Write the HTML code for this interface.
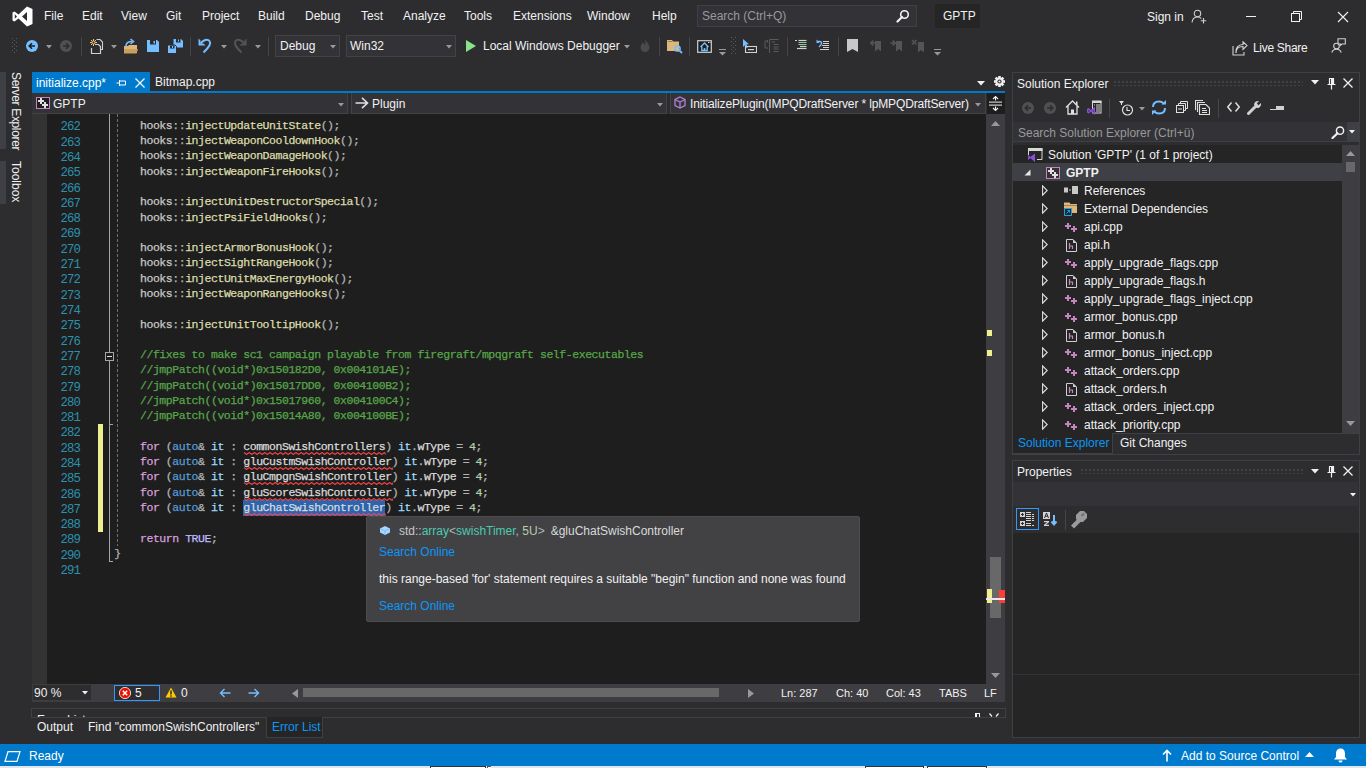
<!DOCTYPE html>
<html><head><meta charset="utf-8">
<style>
*{margin:0;padding:0;box-sizing:border-box}
html,body{width:1366px;height:768px;overflow:hidden;background:#2d2d30;font-family:"Liberation Sans",sans-serif;font-size:12px;color:#f1f1f1}
.a{position:absolute}
.t{position:absolute;white-space:nowrap;line-height:1}
.cd{position:absolute;white-space:pre;font-family:"Liberation Mono",monospace;font-size:11.5px;letter-spacing:-0.45px;line-height:15.31px;color:#dcdcdc;-webkit-text-stroke:0.25px currentColor}
.k{color:#d8a0df}.b{color:#569cd6}.v{color:#9cdcfe}.f{color:#dcdcaa}.c{color:#57a64a}.n{color:#b5cea8}.m{color:#beb7ff}.p{color:#b4b4b4}.g{color:#dadada}.ns{color:#c8c8c8}
</style></head><body>
<svg class="a" style="left:12px;top:6px" width="21" height="21" viewBox="0 0 21 21"><path d="M15 0.5 L20.5 3 V18 L15 20.5 L6.5 12.5 L2.5 15.5 L0.5 14.5 V6.5 L2.5 5.5 L6.5 8.5 Z M15 6 L10 10.5 L15 15 Z M2.8 8.3 V12.7 L5 10.5 Z" fill="#fff" fill-rule="evenodd"/></svg>
<div class="t" style="left:44px;top:9.84px;font-size:12px;">File</div>
<div class="t" style="left:82px;top:9.84px;font-size:12px;">Edit</div>
<div class="t" style="left:121px;top:9.84px;font-size:12px;">View</div>
<div class="t" style="left:166px;top:9.84px;font-size:12px;">Git</div>
<div class="t" style="left:202px;top:9.84px;font-size:12px;">Project</div>
<div class="t" style="left:258px;top:9.84px;font-size:12px;">Build</div>
<div class="t" style="left:305px;top:9.84px;font-size:12px;">Debug</div>
<div class="t" style="left:361px;top:9.84px;font-size:12px;">Test</div>
<div class="t" style="left:403px;top:9.84px;font-size:12px;">Analyze</div>
<div class="t" style="left:464px;top:9.84px;font-size:12px;">Tools</div>
<div class="t" style="left:513px;top:9.84px;font-size:12px;">Extensions</div>
<div class="t" style="left:587px;top:9.84px;font-size:12px;">Window</div>
<div class="t" style="left:652px;top:9.84px;font-size:12px;">Help</div>
<div class="a" style="left:697px;top:5px;width:220px;height:22px;background:#333337;border:1px solid #3f3f46"></div>
<div class="t" style="left:702px;top:9.84px;font-size:12px;color:#999999;">Search (Ctrl+Q)</div>
<svg class="a" style="left:896px;top:9px" width="14" height="14" viewBox="0 0 14 14"><circle cx="8.5" cy="5.5" r="3.8" fill="none" stroke="#f1f1f1" stroke-width="1.6"/><path d="M6 8 L1.5 12.5" stroke="#f1f1f1" stroke-width="2.2" stroke-linecap="round"/></svg>
<div class="a" style="left:935px;top:4px;width:45px;height:24px;background:#252526;"></div>
<div class="t" style="left:943px;top:9.84px;font-size:12px;">GPTP</div>
<div class="t" style="left:1147px;top:10.84px;font-size:12px;">Sign in</div>
<svg class="a" style="left:1191px;top:9px" width="16" height="15" viewBox="0 0 16 15"><circle cx="6.5" cy="4.5" r="3.2" fill="none" stroke="#d0d0d0" stroke-width="1.1"/><path d="M1 13.5 C1.5 9.5 3.5 8 6.5 8 C8.5 8 9.5 8.7 10.3 9.5" fill="none" stroke="#d0d0d0" stroke-width="1.1"/><path d="M12.5 9 V14.5 M9.8 11.8 H15.2" stroke="#d0d0d0" stroke-width="1.1"/></svg>
<div class="a" style="left:1246px;top:16px;width:10px;height:1px;background:#f1f1f1;"></div>
<svg class="a" style="left:1291px;top:11px" width="12" height="12" viewBox="0 0 12 12"><rect x="0.5" y="2.5" width="8" height="8" fill="none" stroke="#f1f1f1"/><path d="M2.5 2.5 V0.5 H10.5 V8.5 H8.5" fill="none" stroke="#f1f1f1"/></svg>
<svg class="a" style="left:1337px;top:11px" width="12" height="12" viewBox="0 0 12 12"><path d="M1 1 L11 11 M11 1 L1 11" stroke="#f1f1f1" stroke-width="1.1"/></svg>
<svg class="a" style="left:12px;top:38px" width="5" height="16" viewBox="0 0 5 16"><rect x="0" y="0" width="1" height="1" fill="#5a5a5e"/><rect x="2" y="2" width="1" height="1" fill="#5a5a5e"/><rect x="4" y="0" width="1" height="1" fill="#5a5a5e"/><rect x="0" y="4" width="1" height="1" fill="#5a5a5e"/><rect x="2" y="6" width="1" height="1" fill="#5a5a5e"/><rect x="4" y="4" width="1" height="1" fill="#5a5a5e"/><rect x="0" y="8" width="1" height="1" fill="#5a5a5e"/><rect x="2" y="10" width="1" height="1" fill="#5a5a5e"/><rect x="4" y="8" width="1" height="1" fill="#5a5a5e"/><rect x="0" y="12" width="1" height="1" fill="#5a5a5e"/><rect x="2" y="14" width="1" height="1" fill="#5a5a5e"/><rect x="4" y="12" width="1" height="1" fill="#5a5a5e"/></svg>
<svg class="a" style="left:26px;top:40px" width="12" height="12" viewBox="0 0 12 12"><circle cx="6" cy="6" r="6" fill="#75beff"/><path d="M9 6 H3.5 M6 3.2 L3.2 6 L6 8.8" fill="none" stroke="#1e1e1e" stroke-width="1.6"/></svg>
<svg class="a" style="left:46px;top:45px" width="6" height="4" viewBox="0 0 6 4"><path d="M0 0 H6 L3 3.5 Z" fill="#999999"/></svg>
<svg class="a" style="left:60px;top:40px" width="12" height="12" viewBox="0 0 12 12"><circle cx="6" cy="6" r="6" fill="#505052"/><path d="M3 6 H8.5 M6 3.2 L8.8 6 L6 8.8" fill="none" stroke="#2d2d30" stroke-width="1.6"/></svg>
<div class="a" style="left:81px;top:37px;width:1px;height:19px;background:#464648;"></div>
<svg class="a" style="left:89px;top:38px" width="15" height="16" viewBox="0 0 15 16"><g stroke="#f5c46e" stroke-width="1"><path d="M4.5 1 V8 M1 4.5 H8 M2 2 L7 7 M7 2 L2 7"/></g><circle cx="4.5" cy="4.5" r="1.5" fill="#2d2d30" stroke="#f5c46e"/><path d="M7.5 1.5 H11 L13.5 4 V11.5 H12" fill="none" stroke="#d0d0d0" stroke-width="1.1"/><path d="M2.5 10 V15.5 H11.5 V8.5 L9.5 6.5 H6" fill="none" stroke="#d0d0d0" stroke-width="1.2"/><path d="M4 12 V14" stroke="#d0d0d0" stroke-width="0"/></svg>
<svg class="a" style="left:111px;top:45px" width="6" height="4" viewBox="0 0 6 4"><path d="M0 0 H6 L3 3.5 Z" fill="#999999"/></svg>
<svg class="a" style="left:123px;top:38px" width="16" height="16" viewBox="0 0 16 16"><path d="M1 8 H5 L6 7 H14 V15 H1 Z" fill="#dcb67a"/><path d="M1 11 H15 L13.5 15.5 H1 Z" fill="#c9a05a"/><path d="M3 8.5 C3 5 5 3.5 9 3.5" fill="none" stroke="#75beff" stroke-width="1.6"/><path d="M7.5 1 L10.5 3.5 L7.5 6" fill="none" stroke="#75beff" stroke-width="1.6"/></svg>
<svg class="a" style="left:147px;top:40px" width="12" height="12" viewBox="0 0 12 12"><path d="M0 0 H10 L12 2 V12 H0 Z" fill="#75beff"/><rect x="3" y="0" width="6" height="4.5" fill="#2d2d30"/><rect x="6.5" y="1" width="1.5" height="2.5" fill="#75beff"/></svg>
<svg class="a" style="left:167px;top:38px" width="16" height="16" viewBox="0 0 16 16"><path d="M6.5 1 H14 L16 3 V9.5 H6.5 Z" fill="#75beff"/><rect x="9" y="1" width="4.5" height="3.5" fill="#2d2d30"/><rect x="11" y="1.5" width="1" height="2" fill="#75beff"/><path d="M0.5 7 H8 L9.5 8.5 V15.5 H0.5 Z" fill="#75beff" stroke="#2d2d30" stroke-width="1"/><rect x="3" y="7.5" width="4.5" height="3" fill="#2d2d30"/><rect x="5" y="8" width="1" height="2" fill="#75beff"/></svg>
<div class="a" style="left:190px;top:37px;width:1px;height:19px;background:#464648;"></div>
<svg class="a" style="left:195px;top:36px" width="20" height="20" viewBox="0 0 20 20"><path d="M3.5 2.5 V9.5 H10.5 L8.5 7.5 H5.5 V4.5 Z" fill="#75beff"/><path d="M5.5 7.5 C8 4 12.5 2.5 14.5 5 C16.5 7.5 15 10.5 8.5 16.5" fill="none" stroke="#75beff" stroke-width="2"/></svg>
<svg class="a" style="left:221px;top:45px" width="6" height="4" viewBox="0 0 6 4"><path d="M0 0 H6 L3 3.5 Z" fill="#999999"/></svg>
<svg class="a" style="left:230px;top:36px" width="20" height="20" viewBox="0 0 20 20"><path d="M16.5 2.5 V9.5 H9.5 L11.5 7.5 H14.5 V4.5 Z" fill="#555557"/><path d="M14.5 7.5 C12 4 7.5 2.5 5.5 5 C3.5 7.5 5 10.5 11.5 16.5" fill="none" stroke="#555557" stroke-width="2"/></svg>
<svg class="a" style="left:255px;top:45px" width="6" height="4" viewBox="0 0 6 4"><path d="M0 0 H6 L3 3.5 Z" fill="#999999"/></svg>
<div class="a" style="left:268px;top:37px;width:1px;height:19px;background:#464648;"></div>
<div class="a" style="left:275px;top:35px;width:65px;height:22px;background:#333337;border:1px solid #434346"></div>
<div class="t" style="left:280px;top:39.84px;font-size:12px;">Debug</div>
<svg class="a" style="left:330px;top:45px" width="6" height="4" viewBox="0 0 6 4"><path d="M0 0 H6 L3 3.5 Z" fill="#999999"/></svg>
<div class="a" style="left:346px;top:35px;width:110px;height:22px;background:#333337;border:1px solid #434346"></div>
<div class="t" style="left:350px;top:39.84px;font-size:12px;">Win32</div>
<svg class="a" style="left:446px;top:45px" width="6" height="4" viewBox="0 0 6 4"><path d="M0 0 H6 L3 3.5 Z" fill="#999999"/></svg>
<svg class="a" style="left:466px;top:40px" width="10" height="12" viewBox="0 0 10 12"><path d="M0 0 L10 6 L0 12 Z" fill="#8ae28a"/></svg>
<div class="t" style="left:483px;top:39.84px;font-size:12px;">Local Windows Debugger</div>
<svg class="a" style="left:624px;top:45px" width="6" height="4" viewBox="0 0 6 4"><path d="M0 0 H6 L3 3.5 Z" fill="#999999"/></svg>
<svg class="a" style="left:640px;top:39px" width="10" height="13" viewBox="0 0 10 13"><path d="M5 0 C6 3 9.5 5 9.5 8.5 C9.5 11 7.5 13 5 13 C2.5 13 0.5 11 0.5 8.5 C0.5 6.5 2 5 3 3 C3.5 5 4.5 5.5 5 6 C5.5 4 5.5 2 5 0 Z" fill="#4a4a4c"/></svg>
<div class="a" style="left:659px;top:37px;width:1px;height:19px;background:#464648;"></div>
<svg class="a" style="left:667px;top:39px" width="16" height="15" viewBox="0 0 16 15"><path d="M0 1 H5 L6 2.5 H12 V12 H0 Z" fill="#dcb67a"/><rect x="1" y="2" width="4" height="1" fill="#a0804a"/><circle cx="10.5" cy="9.5" r="2.6" fill="none" stroke="#75beff" stroke-width="1.5"/><path d="M12.3 11.3 L15 14" stroke="#75beff" stroke-width="1.8"/></svg>
<div class="a" style="left:689px;top:37px;width:1px;height:19px;background:#464648;"></div>
<svg class="a" style="left:697px;top:40px" width="15" height="13" viewBox="0 0 15 13"><rect x="0.7" y="0.7" width="13.6" height="11.6" fill="#1e1e1e" stroke="#d0d0d0" stroke-width="1.2"/><path d="M3.5 7 L7.5 3 L11.5 7 M4.8 6 V10.5 H10.2 V6" fill="none" stroke="#75beff" stroke-width="1.3"/><rect x="6.7" y="8" width="1.6" height="2.5" fill="#75beff"/><rect x="11" y="2" width="1" height="1" fill="#d0d0d0"/><rect x="12.5" y="2" width="1" height="1" fill="#d0d0d0"/></svg>
<svg class="a" style="left:719px;top:49px" width="7" height="7" viewBox="0 0 7 7"><rect x="0" y="0" width="7" height="1" fill="#999"/><path d="M0 3 H7 L3.5 6.5 Z" fill="#999"/></svg>
<svg class="a" style="left:731px;top:37px" width="5" height="18" viewBox="0 0 5 18"><rect x="0" y="0" width="1" height="1" fill="#5a5a5e"/><rect x="2" y="2" width="1" height="1" fill="#5a5a5e"/><rect x="4" y="0" width="1" height="1" fill="#5a5a5e"/><rect x="0" y="4" width="1" height="1" fill="#5a5a5e"/><rect x="2" y="6" width="1" height="1" fill="#5a5a5e"/><rect x="4" y="4" width="1" height="1" fill="#5a5a5e"/><rect x="0" y="8" width="1" height="1" fill="#5a5a5e"/><rect x="2" y="10" width="1" height="1" fill="#5a5a5e"/><rect x="4" y="8" width="1" height="1" fill="#5a5a5e"/><rect x="0" y="12" width="1" height="1" fill="#5a5a5e"/><rect x="2" y="14" width="1" height="1" fill="#5a5a5e"/><rect x="4" y="12" width="1" height="1" fill="#5a5a5e"/><rect x="0" y="16" width="1" height="1" fill="#5a5a5e"/><rect x="2" y="18" width="1" height="1" fill="#5a5a5e"/><rect x="4" y="16" width="1" height="1" fill="#5a5a5e"/></svg>
<svg class="a" style="left:742px;top:38px" width="15" height="15" viewBox="0 0 15 15"><path d="M1 1 L1 9 L3 7.2 L4.5 10 L5.8 9.3 L4.4 6.5 L7 6.3 Z" fill="#75beff"/><rect x="3.5" y="8.5" width="11" height="6" fill="none" stroke="#d0d0d0" stroke-width="1.1"/><rect x="6" y="11" width="6" height="1.2" fill="#d0d0d0"/></svg>
<svg class="a" style="left:764px;top:38px" width="15" height="16" viewBox="0 0 15 16"><g fill="none" stroke="#5a5a5c" stroke-width="1"><path d="M5.5 1.5 H14.5 M5.5 1.5 V15 M7.5 4 H11 M9.5 6.5 H14.5 M9.5 9 H14.5 M9.5 11 H14.5 M9.5 13.5 H14.5 M1 3 V10 H4 M1 3 H4 M3.5 2 V4.5"/></g></svg>
<div class="a" style="left:787px;top:37px;width:1px;height:19px;background:#464648;"></div>
<svg class="a" style="left:795px;top:39px" width="12" height="12" viewBox="0 0 12 12"><g stroke-width="1.2"><path d="M0 1.5 H2" stroke="#d0d0d0"/><path d="M3.5 1.5 H11.5" stroke="#d0d0d0"/><path d="M3.5 3.5 H11.5 M3.5 5.5 H11.5" stroke="#8ad08a"/><path d="M5 7.5 H11.5" stroke="#d0d0d0"/><path d="M2 9.5 H11.5" stroke="#d0d0d0"/></g></svg>
<svg class="a" style="left:816px;top:39px" width="14" height="13" viewBox="0 0 14 13"><g stroke-width="1.2" stroke="#d0d0d0"><path d="M7 2.5 H13 M7 4.5 H13 M6 6.5 H13 M7 8.5 H13 M4 10.5 H13"/></g><path d="M1 2.5 H4 C6 2.5 6.5 5.5 3 8" fill="none" stroke="#75beff" stroke-width="1.4"/><path d="M0.5 0.5 V4 H3.5 Z" fill="#75beff"/></svg>
<div class="a" style="left:838px;top:37px;width:1px;height:19px;background:#464648;"></div>
<svg class="a" style="left:847px;top:39px" width="11" height="13" viewBox="0 0 11 13"><path d="M0 0 H11 V13 L5.5 10 L0 13 Z" fill="#c8c8c8"/></svg>
<svg class="a" style="left:869px;top:39px" width="14" height="14" viewBox="0 0 14 14"><path d="M6 2 H12 V12.5 L9 10 L6 12.5 Z" fill="#555557"/><path d="M6.5 4 H2 M4.3 1.5 L1.8 4 L4.3 6.5" fill="none" stroke="#555557" stroke-width="1.6"/></svg>
<svg class="a" style="left:890px;top:39px" width="14" height="14" viewBox="0 0 14 14"><path d="M6 2 H12 V12.5 L9 10 L6 12.5 Z" fill="#555557"/><path d="M0.5 4 H5 M2.7 1.5 L5.2 4 L2.7 6.5" fill="none" stroke="#555557" stroke-width="1.6"/></svg>
<svg class="a" style="left:911px;top:39px" width="14" height="14" viewBox="0 0 14 14"><path d="M7 3 H13 V13.5 L10 11 L7 13.5 Z" fill="#555557"/><path d="M1 1 L5.5 5.5 M5.5 1 L1 5.5" fill="none" stroke="#555557" stroke-width="1.6"/></svg>
<svg class="a" style="left:934px;top:49px" width="7" height="7" viewBox="0 0 7 7"><rect x="0" y="0" width="7" height="1" fill="#999"/><path d="M0 3 H7 L3.5 6.5 Z" fill="#999"/></svg>
<svg class="a" style="left:1232px;top:41px" width="16" height="15" viewBox="0 0 16 15"><path d="M1 5 V14 H12 V11" fill="none" stroke="#d0d0d0" stroke-width="1.1"/><path d="M4 12 C4 7 7 5.5 11 5.5 V8.5 L15 4.5 L11 0.8 V3.5 C6 3.5 3.5 7 4 12 Z" fill="none" stroke="#d0d0d0" stroke-width="1.1"/></svg>
<div class="t" style="left:1253px;top:41.84px;font-size:12px;letter-spacing:-0.3px">Live Share</div>
<svg class="a" style="left:1331px;top:38px" width="15" height="15" viewBox="0 0 15 15"><circle cx="5.5" cy="8" r="2.8" fill="none" stroke="#d0d0d0" stroke-width="1.1"/><path d="M0.8 14.5 C1.5 12 3 11.2 5.5 11.2 C8 11.2 9.5 12 10.2 14.5" fill="none" stroke="#d0d0d0" stroke-width="1.1"/><path d="M7 0.7 H14.3 V6 H11 L9.5 7.3 V6 H7 Z" fill="none" stroke="#d0d0d0" stroke-width="1.1"/></svg>
<div class="a" style="left:0px;top:72px;width:6px;height:77px;background:#3f3f46;"></div>
<div class="a" style="left:0px;top:161px;width:6px;height:43px;background:#3f3f46;"></div>
<div class="t" style="left:22px;top:72px;font-size:12px;letter-spacing:-0.35px;transform-origin:0 0;transform:rotate(90deg);color:#f1f1f1">Server Explorer</div>
<div class="t" style="left:22px;top:161px;font-size:12px;transform-origin:0 0;transform:rotate(90deg);color:#f1f1f1">Toolbox</div>
<div class="a" style="left:32px;top:72px;width:118px;height:21px;background:#007acc;"></div>
<div class="a" style="left:32px;top:91px;width:973px;height:2px;background:#007acc;"></div>
<div class="t" style="left:36px;top:76.84px;font-size:12px;color:#ffffff;">initialize.cpp*</div>
<svg class="a" style="left:116px;top:78px" width="11" height="10" viewBox="0 0 11 10"><path d="M0.5 5 H3.5 M3.5 2 V8 M3.5 3 H9.5 V7 H3.5" fill="none" stroke="#fff" stroke-width="1"/></svg>
<svg class="a" style="left:135px;top:78px" width="10" height="10" viewBox="0 0 10 10"><path d="M0.5 0.5 L9.5 9.5 M9.5 0.5 L0.5 9.5" stroke="#fff" stroke-width="1.2"/></svg>
<div class="t" style="left:155px;top:76.34px;font-size:12px;">Bitmap.cpp</div>
<svg class="a" style="left:977px;top:81px" width="8" height="5" viewBox="0 0 8 5"><path d="M0 0 H8 L4 4.5 Z" fill="#f1f1f1"/></svg>
<svg class="a" style="left:994px;top:76px" width="11" height="11" viewBox="0 0 11 11"><g fill="#f1f1f1"><circle cx="5.5" cy="5.5" r="3.9"/><rect x="4.2" y="0" width="2.6" height="3" transform="rotate(0 5.5 5.5)"/><rect x="4.2" y="0" width="2.6" height="3" transform="rotate(45 5.5 5.5)"/><rect x="4.2" y="0" width="2.6" height="3" transform="rotate(90 5.5 5.5)"/><rect x="4.2" y="0" width="2.6" height="3" transform="rotate(135 5.5 5.5)"/><rect x="4.2" y="0" width="2.6" height="3" transform="rotate(180 5.5 5.5)"/><rect x="4.2" y="0" width="2.6" height="3" transform="rotate(225 5.5 5.5)"/><rect x="4.2" y="0" width="2.6" height="3" transform="rotate(270 5.5 5.5)"/><rect x="4.2" y="0" width="2.6" height="3" transform="rotate(315 5.5 5.5)"/></g><circle cx="5.5" cy="5.5" r="2.1" fill="#2d2d30"/><rect x="4.6" y="4.6" width="1.8" height="1.8" fill="#f1f1f1"/></svg>
<div class="a" style="left:32px;top:93px;width:973px;height:21px;background:#2d2d30;"></div>
<div class="a" style="left:32px;top:93px;width:316px;height:21px;background:#333337;border-right:1px solid #434346;border-bottom:1px solid #434346"></div>
<div class="a" style="left:351px;top:93px;width:316px;height:21px;background:#333337;border-left:1px solid #434346;border-right:1px solid #434346;border-bottom:1px solid #434346"></div>
<div class="a" style="left:670px;top:93px;width:316px;height:21px;background:#333337;border-left:1px solid #434346;border-right:1px solid #434346;border-bottom:1px solid #434346"></div>
<svg class="a" style="left:36px;top:97px" width="14" height="12" viewBox="0 0 14 12"><rect x="0.5" y="0.5" width="13" height="11" fill="#1e1e1e" stroke="#c586c0" stroke-width="1"/><g fill="#e0e0e0"><rect x="2" y="3" width="6" height="2"/><rect x="4" y="1" width="2" height="6"/><rect x="6" y="7" width="6" height="2"/><rect x="8" y="5" width="2" height="6"/></g></svg>
<div class="t" style="left:53px;top:97.84px;font-size:12px;">GPTP</div>
<svg class="a" style="left:338px;top:103px" width="6" height="4" viewBox="0 0 6 4"><path d="M0 0 H6 L3 3.5 Z" fill="#999999"/></svg>
<svg class="a" style="left:355px;top:97px" width="14" height="12" viewBox="0 0 14 12"><path d="M0.5 6 H12.5 M7 0.8 L12.5 6 L7 11.2" fill="none" stroke="#e0e0e0" stroke-width="1.6"/></svg>
<div class="t" style="left:372px;top:97.84px;font-size:12px;">Plugin</div>
<svg class="a" style="left:657px;top:103px" width="6" height="4" viewBox="0 0 6 4"><path d="M0 0 H6 L3 3.5 Z" fill="#999999"/></svg>
<svg class="a" style="left:674px;top:96px" width="12" height="13" viewBox="0 0 12 13"><path d="M6 1 L11 3.5 V9.5 L6 12 L1 9.5 V3.5 Z M1 3.5 L6 6 L11 3.5 M6 6 V12" fill="none" stroke="#b180d7" stroke-width="1.3"/></svg>
<div class="t" style="left:690px;top:97.84px;font-size:12px;letter-spacing:-0.14px">InitializePlugin(IMPQDraftServer * lpMPQDraftServer)</div>
<svg class="a" style="left:975px;top:103px" width="6" height="4" viewBox="0 0 6 4"><path d="M0 0 H6 L3 3.5 Z" fill="#999999"/></svg>
<div class="a" style="left:987px;top:93px;width:18px;height:21px;background:#1e1e1e;"></div>
<svg class="a" style="left:989px;top:96px" width="13" height="15" viewBox="0 0 13 15"><path d="M6.5 0.5 V4.5 M6.5 10.5 V14.5 M4 3 L6.5 0.5 L9 3 M4 12 L6.5 14.5 L9 12" fill="none" stroke="#f1f1f1" stroke-width="1.1"/><rect x="0" y="5.6" width="13" height="1" fill="#f1f1f1"/><rect x="0" y="8.6" width="13" height="1" fill="#f1f1f1"/></svg>
<div class="a" style="left:32px;top:114px;width:15px;height:570px;background:#333333;"></div>
<div class="a" style="left:47px;top:114px;width:939px;height:570px;background:#1e1e1e;"></div>
<div class="a" style="left:243.2px;top:500.1px;width:142px;height:15.7px;background:#2d64ae;"></div>
<div class="a" style="left:98px;top:423.6px;width:5px;height:108px;background:#efef90;"></div>
<div class="a" style="left:109px;top:114px;width:1px;height:448px;background:#a5a5a5;"></div>
<div class="a" style="left:109px;top:424px;width:4px;height:1px;background:#a5a5a5;"></div>
<div class="a" style="left:109px;top:561px;width:4px;height:1px;background:#a5a5a5;"></div>
<div class="a" style="left:105px;top:352px;width:9px;height:9px;background:#1e1e1e;border:1px solid #a5a5a5"></div>
<div class="a" style="left:107px;top:356px;width:5px;height:1px;background:#e0e0e0;"></div>
<div class="a" style="left:117px;top:114px;width:1px;height:432px;background:repeating-linear-gradient(#6e6e6e 0 3px,transparent 3px 5px)"></div>
<div class="cd" style="left:19px;width:61px;text-align:right;top:121.00px;line-height:12px;color:#2b91af;font-size:12.3px;letter-spacing:-0.9px;-webkit-text-stroke:0">262</div>
<div class="cd" style="left:140.00px;top:119.80px;line-height:12px"><span class="ns">hooks</span><span class="p">::</span><span class="f">injectUpdateUnitState</span><span class="p">();</span></div>
<div class="cd" style="left:19px;width:61px;text-align:right;top:137.00px;line-height:12px;color:#2b91af;font-size:12.3px;letter-spacing:-0.9px;-webkit-text-stroke:0">263</div>
<div class="cd" style="left:140.00px;top:135.09px;line-height:12px"><span class="ns">hooks</span><span class="p">::</span><span class="f">injectWeaponCooldownHook</span><span class="p">();</span></div>
<div class="cd" style="left:19px;width:61px;text-align:right;top:152.00px;line-height:12px;color:#2b91af;font-size:12.3px;letter-spacing:-0.9px;-webkit-text-stroke:0">264</div>
<div class="cd" style="left:140.00px;top:150.38px;line-height:12px"><span class="ns">hooks</span><span class="p">::</span><span class="f">injectWeaponDamageHook</span><span class="p">();</span></div>
<div class="cd" style="left:19px;width:61px;text-align:right;top:167.00px;line-height:12px;color:#2b91af;font-size:12.3px;letter-spacing:-0.9px;-webkit-text-stroke:0">265</div>
<div class="cd" style="left:140.00px;top:165.67px;line-height:12px"><span class="ns">hooks</span><span class="p">::</span><span class="f">injectWeaponFireHooks</span><span class="p">();</span></div>
<div class="cd" style="left:19px;width:61px;text-align:right;top:183.00px;line-height:12px;color:#2b91af;font-size:12.3px;letter-spacing:-0.9px;-webkit-text-stroke:0">266</div>
<div class="cd" style="left:19px;width:61px;text-align:right;top:198.00px;line-height:12px;color:#2b91af;font-size:12.3px;letter-spacing:-0.9px;-webkit-text-stroke:0">267</div>
<div class="cd" style="left:140.00px;top:196.25px;line-height:12px"><span class="ns">hooks</span><span class="p">::</span><span class="f">injectUnitDestructorSpecial</span><span class="p">();</span></div>
<div class="cd" style="left:19px;width:61px;text-align:right;top:213.00px;line-height:12px;color:#2b91af;font-size:12.3px;letter-spacing:-0.9px;-webkit-text-stroke:0">268</div>
<div class="cd" style="left:140.00px;top:211.54px;line-height:12px"><span class="ns">hooks</span><span class="p">::</span><span class="f">injectPsiFieldHooks</span><span class="p">();</span></div>
<div class="cd" style="left:19px;width:61px;text-align:right;top:228.00px;line-height:12px;color:#2b91af;font-size:12.3px;letter-spacing:-0.9px;-webkit-text-stroke:0">269</div>
<div class="cd" style="left:19px;width:61px;text-align:right;top:244.00px;line-height:12px;color:#2b91af;font-size:12.3px;letter-spacing:-0.9px;-webkit-text-stroke:0">270</div>
<div class="cd" style="left:140.00px;top:242.12px;line-height:12px"><span class="ns">hooks</span><span class="p">::</span><span class="f">injectArmorBonusHook</span><span class="p">();</span></div>
<div class="cd" style="left:19px;width:61px;text-align:right;top:259.00px;line-height:12px;color:#2b91af;font-size:12.3px;letter-spacing:-0.9px;-webkit-text-stroke:0">271</div>
<div class="cd" style="left:140.00px;top:257.41px;line-height:12px"><span class="ns">hooks</span><span class="p">::</span><span class="f">injectSightRangeHook</span><span class="p">();</span></div>
<div class="cd" style="left:19px;width:61px;text-align:right;top:274.00px;line-height:12px;color:#2b91af;font-size:12.3px;letter-spacing:-0.9px;-webkit-text-stroke:0">272</div>
<div class="cd" style="left:140.00px;top:272.70px;line-height:12px"><span class="ns">hooks</span><span class="p">::</span><span class="f">injectUnitMaxEnergyHook</span><span class="p">();</span></div>
<div class="cd" style="left:19px;width:61px;text-align:right;top:290.00px;line-height:12px;color:#2b91af;font-size:12.3px;letter-spacing:-0.9px;-webkit-text-stroke:0">273</div>
<div class="cd" style="left:140.00px;top:287.99px;line-height:12px"><span class="ns">hooks</span><span class="p">::</span><span class="f">injectWeaponRangeHooks</span><span class="p">();</span></div>
<div class="cd" style="left:19px;width:61px;text-align:right;top:305.00px;line-height:12px;color:#2b91af;font-size:12.3px;letter-spacing:-0.9px;-webkit-text-stroke:0">274</div>
<div class="cd" style="left:19px;width:61px;text-align:right;top:320.00px;line-height:12px;color:#2b91af;font-size:12.3px;letter-spacing:-0.9px;-webkit-text-stroke:0">275</div>
<div class="cd" style="left:140.00px;top:318.57px;line-height:12px"><span class="ns">hooks</span><span class="p">::</span><span class="f">injectUnitTooltipHook</span><span class="p">();</span></div>
<div class="cd" style="left:19px;width:61px;text-align:right;top:336.00px;line-height:12px;color:#2b91af;font-size:12.3px;letter-spacing:-0.9px;-webkit-text-stroke:0">276</div>
<div class="cd" style="left:19px;width:61px;text-align:right;top:351.00px;line-height:12px;color:#2b91af;font-size:12.3px;letter-spacing:-0.9px;-webkit-text-stroke:0">277</div>
<div class="cd" style="left:140.00px;top:349.15px;line-height:12px"><span class="c">//fixes to make sc1 campaign playable from firegraft/mpqgraft self-executables</span></div>
<div class="cd" style="left:19px;width:61px;text-align:right;top:366.00px;line-height:12px;color:#2b91af;font-size:12.3px;letter-spacing:-0.9px;-webkit-text-stroke:0">278</div>
<div class="cd" style="left:140.00px;top:364.44px;line-height:12px"><span class="c">//jmpPatch((void*)0x150182D0, 0x004101AE);</span></div>
<div class="cd" style="left:19px;width:61px;text-align:right;top:382.00px;line-height:12px;color:#2b91af;font-size:12.3px;letter-spacing:-0.9px;-webkit-text-stroke:0">279</div>
<div class="cd" style="left:140.00px;top:379.73px;line-height:12px"><span class="c">//jmpPatch((void*)0x15017DD0, 0x004100B2);</span></div>
<div class="cd" style="left:19px;width:61px;text-align:right;top:397.00px;line-height:12px;color:#2b91af;font-size:12.3px;letter-spacing:-0.9px;-webkit-text-stroke:0">280</div>
<div class="cd" style="left:140.00px;top:395.02px;line-height:12px"><span class="c">//jmpPatch((void*)0x15017960, 0x004100C4);</span></div>
<div class="cd" style="left:19px;width:61px;text-align:right;top:412.00px;line-height:12px;color:#2b91af;font-size:12.3px;letter-spacing:-0.9px;-webkit-text-stroke:0">281</div>
<div class="cd" style="left:140.00px;top:410.31px;line-height:12px"><span class="c">//jmpPatch((void*)0x15014A80, 0x004100BE);</span></div>
<div class="cd" style="left:19px;width:61px;text-align:right;top:427.00px;line-height:12px;color:#2b91af;font-size:12.3px;letter-spacing:-0.9px;-webkit-text-stroke:0">282</div>
<div class="cd" style="left:19px;width:61px;text-align:right;top:443.00px;line-height:12px;color:#2b91af;font-size:12.3px;letter-spacing:-0.9px;-webkit-text-stroke:0">283</div>
<div class="cd" style="left:140.00px;top:440.89px;line-height:12px"><span class="k">for</span> <span class="p">(</span><span class="b">auto</span><span class="p">&amp;</span> <span class="v">it</span> <span class="p">:</span> <span class="g">commonSwishControllers</span><span class="p">)</span> <span class="v">it</span><span class="p">.</span><span class="g">wType</span> <span class="p">=</span> <span class="n">4</span><span class="p">;</span></div>
<div class="cd" style="left:19px;width:61px;text-align:right;top:458.00px;line-height:12px;color:#2b91af;font-size:12.3px;letter-spacing:-0.9px;-webkit-text-stroke:0">284</div>
<div class="cd" style="left:140.00px;top:456.18px;line-height:12px"><span class="k">for</span> <span class="p">(</span><span class="b">auto</span><span class="p">&amp;</span> <span class="v">it</span> <span class="p">:</span> <span class="g">gluCustmSwishController</span><span class="p">)</span> <span class="v">it</span><span class="p">.</span><span class="g">wType</span> <span class="p">=</span> <span class="n">4</span><span class="p">;</span></div>
<div class="cd" style="left:19px;width:61px;text-align:right;top:473.00px;line-height:12px;color:#2b91af;font-size:12.3px;letter-spacing:-0.9px;-webkit-text-stroke:0">285</div>
<div class="cd" style="left:140.00px;top:471.47px;line-height:12px"><span class="k">for</span> <span class="p">(</span><span class="b">auto</span><span class="p">&amp;</span> <span class="v">it</span> <span class="p">:</span> <span class="g">gluCmpgnSwishController</span><span class="p">)</span> <span class="v">it</span><span class="p">.</span><span class="g">wType</span> <span class="p">=</span> <span class="n">4</span><span class="p">;</span></div>
<div class="cd" style="left:19px;width:61px;text-align:right;top:489.00px;line-height:12px;color:#2b91af;font-size:12.3px;letter-spacing:-0.9px;-webkit-text-stroke:0">286</div>
<div class="cd" style="left:140.00px;top:486.76px;line-height:12px"><span class="k">for</span> <span class="p">(</span><span class="b">auto</span><span class="p">&amp;</span> <span class="v">it</span> <span class="p">:</span> <span class="g">gluScoreSwishController</span><span class="p">)</span> <span class="v">it</span><span class="p">.</span><span class="g">wType</span> <span class="p">=</span> <span class="n">4</span><span class="p">;</span></div>
<div class="cd" style="left:19px;width:61px;text-align:right;top:504.00px;line-height:12px;color:#2b91af;font-size:12.3px;letter-spacing:-0.9px;-webkit-text-stroke:0">287</div>
<div class="cd" style="left:140.00px;top:502.05px;line-height:12px"><span class="k">for</span> <span class="p">(</span><span class="b">auto</span><span class="p">&amp;</span> <span class="v">it</span> <span class="p">:</span> <span class="g">gluChatSwishController</span><span class="p">)</span> <span class="v">it</span><span class="p">.</span><span class="g">wType</span> <span class="p">=</span> <span class="n">4</span><span class="p">;</span></div>
<div class="cd" style="left:19px;width:61px;text-align:right;top:519.00px;line-height:12px;color:#2b91af;font-size:12.3px;letter-spacing:-0.9px;-webkit-text-stroke:0">288</div>
<div class="cd" style="left:19px;width:61px;text-align:right;top:534.00px;line-height:12px;color:#2b91af;font-size:12.3px;letter-spacing:-0.9px;-webkit-text-stroke:0">289</div>
<div class="cd" style="left:140.00px;top:532.63px;line-height:12px"><span class="k">return</span> <span class="m">TRUE</span><span class="p">;</span></div>
<div class="cd" style="left:19px;width:61px;text-align:right;top:550.00px;line-height:12px;color:#2b91af;font-size:12.3px;letter-spacing:-0.9px;-webkit-text-stroke:0">290</div>
<div class="cd" style="left:114.20px;top:547.92px;line-height:12px"><span class="p">}</span></div>
<div class="cd" style="left:19px;width:61px;text-align:right;top:565.00px;line-height:12px;color:#2b91af;font-size:12.3px;letter-spacing:-0.9px;-webkit-text-stroke:0">291</div>
<svg class="a" style="left:243.5px;top:451.69px" width="142" height="3" viewBox="0 0 142 3"><path d="M0 0.5 L2.60 2.5 L5.20 0.5 L7.80 2.5 L10.40 0.5 L13.00 2.5 L15.60 0.5 L18.20 2.5 L20.80 0.5 L23.40 2.5 L26.00 0.5 L28.60 2.5 L31.20 0.5 L33.80 2.5 L36.40 0.5 L39.00 2.5 L41.60 0.5 L44.20 2.5 L46.80 0.5 L49.40 2.5 L52.00 0.5 L54.60 2.5 L57.20 0.5 L59.80 2.5 L62.40 0.5 L65.00 2.5 L67.60 0.5 L70.20 2.5 L72.80 0.5 L75.40 2.5 L78.00 0.5 L80.60 2.5 L83.20 0.5 L85.80 2.5 L88.40 0.5 L91.00 2.5 L93.60 0.5 L96.20 2.5 L98.80 0.5 L101.40 2.5 L104.00 0.5 L106.60 2.5 L109.20 0.5 L111.80 2.5 L114.40 0.5 L117.00 2.5 L119.60 0.5 L122.20 2.5 L124.80 0.5 L127.40 2.5 L130.00 0.5 L132.60 2.5 L135.20 0.5 L137.80 2.5 L140.40 0.5 L141.90 2.5" fill="none" stroke="#fa4646" stroke-width="1.05"/></svg>
<svg class="a" style="left:243.5px;top:466.98px" width="149" height="3" viewBox="0 0 149 3"><path d="M0 0.5 L2.60 2.5 L5.20 0.5 L7.80 2.5 L10.40 0.5 L13.00 2.5 L15.60 0.5 L18.20 2.5 L20.80 0.5 L23.40 2.5 L26.00 0.5 L28.60 2.5 L31.20 0.5 L33.80 2.5 L36.40 0.5 L39.00 2.5 L41.60 0.5 L44.20 2.5 L46.80 0.5 L49.40 2.5 L52.00 0.5 L54.60 2.5 L57.20 0.5 L59.80 2.5 L62.40 0.5 L65.00 2.5 L67.60 0.5 L70.20 2.5 L72.80 0.5 L75.40 2.5 L78.00 0.5 L80.60 2.5 L83.20 0.5 L85.80 2.5 L88.40 0.5 L91.00 2.5 L93.60 0.5 L96.20 2.5 L98.80 0.5 L101.40 2.5 L104.00 0.5 L106.60 2.5 L109.20 0.5 L111.80 2.5 L114.40 0.5 L117.00 2.5 L119.60 0.5 L122.20 2.5 L124.80 0.5 L127.40 2.5 L130.00 0.5 L132.60 2.5 L135.20 0.5 L137.80 2.5 L140.40 0.5 L143.00 2.5 L145.60 0.5 L148.20 2.5 L148.35 0.5" fill="none" stroke="#fa4646" stroke-width="1.05"/></svg>
<svg class="a" style="left:243.5px;top:482.27px" width="149" height="3" viewBox="0 0 149 3"><path d="M0 0.5 L2.60 2.5 L5.20 0.5 L7.80 2.5 L10.40 0.5 L13.00 2.5 L15.60 0.5 L18.20 2.5 L20.80 0.5 L23.40 2.5 L26.00 0.5 L28.60 2.5 L31.20 0.5 L33.80 2.5 L36.40 0.5 L39.00 2.5 L41.60 0.5 L44.20 2.5 L46.80 0.5 L49.40 2.5 L52.00 0.5 L54.60 2.5 L57.20 0.5 L59.80 2.5 L62.40 0.5 L65.00 2.5 L67.60 0.5 L70.20 2.5 L72.80 0.5 L75.40 2.5 L78.00 0.5 L80.60 2.5 L83.20 0.5 L85.80 2.5 L88.40 0.5 L91.00 2.5 L93.60 0.5 L96.20 2.5 L98.80 0.5 L101.40 2.5 L104.00 0.5 L106.60 2.5 L109.20 0.5 L111.80 2.5 L114.40 0.5 L117.00 2.5 L119.60 0.5 L122.20 2.5 L124.80 0.5 L127.40 2.5 L130.00 0.5 L132.60 2.5 L135.20 0.5 L137.80 2.5 L140.40 0.5 L143.00 2.5 L145.60 0.5 L148.20 2.5 L148.35 0.5" fill="none" stroke="#fa4646" stroke-width="1.05"/></svg>
<svg class="a" style="left:243.5px;top:497.56px" width="149" height="3" viewBox="0 0 149 3"><path d="M0 0.5 L2.60 2.5 L5.20 0.5 L7.80 2.5 L10.40 0.5 L13.00 2.5 L15.60 0.5 L18.20 2.5 L20.80 0.5 L23.40 2.5 L26.00 0.5 L28.60 2.5 L31.20 0.5 L33.80 2.5 L36.40 0.5 L39.00 2.5 L41.60 0.5 L44.20 2.5 L46.80 0.5 L49.40 2.5 L52.00 0.5 L54.60 2.5 L57.20 0.5 L59.80 2.5 L62.40 0.5 L65.00 2.5 L67.60 0.5 L70.20 2.5 L72.80 0.5 L75.40 2.5 L78.00 0.5 L80.60 2.5 L83.20 0.5 L85.80 2.5 L88.40 0.5 L91.00 2.5 L93.60 0.5 L96.20 2.5 L98.80 0.5 L101.40 2.5 L104.00 0.5 L106.60 2.5 L109.20 0.5 L111.80 2.5 L114.40 0.5 L117.00 2.5 L119.60 0.5 L122.20 2.5 L124.80 0.5 L127.40 2.5 L130.00 0.5 L132.60 2.5 L135.20 0.5 L137.80 2.5 L140.40 0.5 L143.00 2.5 L145.60 0.5 L148.20 2.5 L148.35 0.5" fill="none" stroke="#fa4646" stroke-width="1.05"/></svg>
<svg class="a" style="left:243.5px;top:512.85px" width="142" height="3" viewBox="0 0 142 3"><path d="M0 0.5 L2.60 2.5 L5.20 0.5 L7.80 2.5 L10.40 0.5 L13.00 2.5 L15.60 0.5 L18.20 2.5 L20.80 0.5 L23.40 2.5 L26.00 0.5 L28.60 2.5 L31.20 0.5 L33.80 2.5 L36.40 0.5 L39.00 2.5 L41.60 0.5 L44.20 2.5 L46.80 0.5 L49.40 2.5 L52.00 0.5 L54.60 2.5 L57.20 0.5 L59.80 2.5 L62.40 0.5 L65.00 2.5 L67.60 0.5 L70.20 2.5 L72.80 0.5 L75.40 2.5 L78.00 0.5 L80.60 2.5 L83.20 0.5 L85.80 2.5 L88.40 0.5 L91.00 2.5 L93.60 0.5 L96.20 2.5 L98.80 0.5 L101.40 2.5 L104.00 0.5 L106.60 2.5 L109.20 0.5 L111.80 2.5 L114.40 0.5 L117.00 2.5 L119.60 0.5 L122.20 2.5 L124.80 0.5 L127.40 2.5 L130.00 0.5 L132.60 2.5 L135.20 0.5 L137.80 2.5 L140.40 0.5 L141.90 2.5" fill="none" stroke="#fa4646" stroke-width="1.05"/></svg>
<div class="a" style="left:986px;top:114px;width:19px;height:588px;background:#3e3e42;"></div>
<svg class="a" style="left:991px;top:121px" width="9" height="5" viewBox="0 0 9 5"><path d="M0 5 L4.5 0 L9 5 Z" fill="#999999"/></svg>
<svg class="a" style="left:991px;top:673px" width="9" height="5" viewBox="0 0 9 5"><path d="M0 0 L4.5 5 L9 0 Z" fill="#999999"/></svg>
<div class="a" style="left:990px;top:557px;width:11px;height:61px;background:#686868;"></div>
<div class="a" style="left:987px;top:330px;width:5px;height:6px;background:#efef90;"></div>
<div class="a" style="left:987px;top:349.5px;width:5px;height:6px;background:#efef90;"></div>
<div class="a" style="left:987px;top:589px;width:5px;height:14px;background:#efef90;"></div>
<div class="a" style="left:999px;top:590px;width:6px;height:12.5px;background:#fc3e36;"></div>
<div class="a" style="left:986px;top:598px;width:19px;height:2px;background:#e8e8e8;"></div>
<div class="a" style="left:32px;top:684px;width:954px;height:18px;background:#3e3e42;"></div>
<div class="a" style="left:33px;top:685px;width:58px;height:15px;background:#2d2d30;"></div>
<div class="t" style="left:34px;top:686.84px;font-size:12px;">90 %</div>
<svg class="a" style="left:82px;top:691px" width="6" height="4" viewBox="0 0 6 4"><path d="M0 0 H6 L3 3.5 Z" fill="#f1f1f1"/></svg>
<div class="a" style="left:114px;top:685px;width:46px;height:16px;background:#2d2d30;border:1px solid #3399ff"></div>
<svg class="a" style="left:119px;top:687px" width="12" height="12" viewBox="0 0 12 12"><circle cx="6" cy="6" r="5.6" fill="#e51400"/><circle cx="6" cy="6" r="5.6" fill="none" stroke="#fff" stroke-width="0.8"/><path d="M3.8 3.8 L8.2 8.2 M8.2 3.8 L3.8 8.2" stroke="#fff" stroke-width="1.5"/></svg>
<div class="t" style="left:135px;top:686.84px;font-size:12px;">5</div>
<svg class="a" style="left:165px;top:687px" width="12" height="11" viewBox="0 0 12 11"><path d="M6 0.5 L11.5 10.5 H0.5 Z" fill="#ffcc00"/><rect x="5.3" y="3.5" width="1.4" height="4" fill="#1e1e1e"/><rect x="5.3" y="8.3" width="1.4" height="1.4" fill="#1e1e1e"/></svg>
<div class="t" style="left:181px;top:686.84px;font-size:12px;">0</div>
<svg class="a" style="left:219px;top:688px" width="12" height="10" viewBox="0 0 12 10"><path d="M11.5 5 H1.5 M5.5 1 L1.5 5 L5.5 9" fill="none" stroke="#75beff" stroke-width="1.4"/></svg>
<svg class="a" style="left:248px;top:688px" width="12" height="10" viewBox="0 0 12 10"><path d="M0.5 5 H10.5 M6.5 1 L10.5 5 L6.5 9" fill="none" stroke="#75beff" stroke-width="1.4"/></svg>
<svg class="a" style="left:292px;top:689px" width="6" height="9" viewBox="0 0 6 9"><path d="M6 0 L0 4.5 L6 9 Z" fill="#999999"/></svg>
<div class="a" style="left:303px;top:688px;width:416px;height:9px;background:#686868;"></div>
<svg class="a" style="left:748px;top:689px" width="6" height="9" viewBox="0 0 6 9"><path d="M0 0 L6 4.5 L0 9 Z" fill="#999999"/></svg>
<div class="t" style="left:781px;top:688.18px;font-size:11px;">Ln: 287</div>
<div class="t" style="left:836px;top:688.18px;font-size:11px;">Ch: 40</div>
<div class="t" style="left:886px;top:688.18px;font-size:11px;">Col: 43</div>
<div class="t" style="left:939px;top:688.18px;font-size:11px;">TABS</div>
<div class="t" style="left:984px;top:688.18px;font-size:11px;">LF</div>
<div class="a" style="left:31px;top:708px;width:975px;height:10px;border:1px solid #3f3f46;border-bottom:none;overflow:hidden"><div class="t" style="left:5px;top:5px;font-size:12px;color:#f1f1f1">Error List</div></div>
<div class="a" style="left:31px;top:717px;width:975px;height:1px;background:#3f3f46;"></div>
<div class="a" style="left:975px;top:713px;width:5px;height:4px;background:#f1f1f1;"></div>
<div class="a" style="left:977px;top:714px;width:2px;height:3px;background:#2d2d30;"></div>
<svg class="a" style="left:989px;top:713px" width="10" height="4" viewBox="0 0 10 4"><path d="M0.5 0.5 L3 3.5 M9.5 0.5 L7 3.5" stroke="#f1f1f1" stroke-width="1.2"/></svg>
<div class="t" style="left:37px;top:720.84px;font-size:12px;">Output</div>
<div class="t" style="left:88px;top:720.84px;font-size:12px;">Find "commonSwishControllers"</div>
<div class="a" style="left:266px;top:717px;width:57px;height:21px;background:#252526;border:1px solid #3f3f46;border-top:none"></div>
<div class="t" style="left:272px;top:720.84px;font-size:12px;color:#0b97f7;">Error List</div>
<div class="a" style="left:0px;top:744px;width:1366px;height:22px;background:#007acc;"></div>
<div class="a" style="left:0px;top:766px;width:1366px;height:2px;background:#dfe6ee;"></div>
<div class="a" style="left:430px;top:766px;width:56px;height:2px;background:#ffffff;border:1px solid #333;border-bottom:none"></div>
<div class="a" style="left:487px;top:766px;width:4px;height:2px;background:#ffffff;border-left:1px solid #555;border-top:1px solid #555"></div>
<div class="a" style="left:865px;top:766px;width:59px;height:2px;background:#ffffff;border:1px solid #333;border-bottom:none"></div>
<div class="a" style="left:927px;top:766px;width:60px;height:2px;background:#ffffff;border:1px solid #333;border-bottom:none"></div>
<svg class="a" style="left:4px;top:751px" width="17" height="11" viewBox="0 0 17 11"><path d="M4 0.7 H16 L13 10.3 H1 Z" fill="none" stroke="#fff" stroke-width="1.2"/></svg>
<div class="t" style="left:29px;top:749.84px;font-size:12px;color:#ffffff;">Ready</div>
<svg class="a" style="left:1162px;top:749px" width="10" height="13" viewBox="0 0 10 13"><path d="M5 12.5 V1.5 M1 5.5 L5 1.5 L9 5.5" fill="none" stroke="#fff" stroke-width="1.6"/></svg>
<div class="t" style="left:1181px;top:749.84px;font-size:12px;color:#ffffff;">Add to Source Control</div>
<svg class="a" style="left:1305px;top:752px" width="9" height="5" viewBox="0 0 9 5"><path d="M0 5 L4.5 0 L9 5 Z" fill="#fff"/></svg>
<svg class="a" style="left:1333px;top:748px" width="15" height="15" viewBox="0 0 15 15"><path d="M7.5 0.5 C4 0.5 3 3 3 6 V9 L1 11.5 H14 L12 9 V6 C12 3 11 0.5 7.5 0.5 Z" fill="#fff"/><path d="M5.5 12.5 H9.5 C9.5 14 8.5 14.5 7.5 14.5 C6.5 14.5 5.5 14 5.5 12.5 Z" fill="#fff"/></svg>
<div class="a" style="left:1012px;top:72px;width:348px;height:383px;background:#2d2d30;border:1px solid #3f3f46"></div>
<div class="t" style="left:1017px;top:77.84px;font-size:12px;">Solution Explorer</div>
<div class="a" style="left:1113px;top:80px;width:190px;height:6px;background-image:radial-gradient(#424246 0.8px, transparent 0.9px);background-size:4px 4px"></div>
<svg class="a" style="left:1311px;top:80px" width="8" height="5" viewBox="0 0 8 5"><path d="M0 0 H8 L4 4.5 Z" fill="#f1f1f1"/></svg>
<svg class="a" style="left:1327px;top:78px" width="9" height="12" viewBox="0 0 9 12"><path d="M2 0.5 H7 M2.5 0.5 V6.5 M6.5 0.5 V6.5 M0.5 6.5 H8.5 M4.5 6.5 V11.5" fill="none" stroke="#f1f1f1" stroke-width="1.2"/><rect x="4" y="1" width="2" height="5" fill="#f1f1f1"/></svg>
<svg class="a" style="left:1343px;top:78px" width="10" height="10" viewBox="0 0 10 10"><path d="M0.5 0.5 L9.5 9.5 M9.5 0.5 L0.5 9.5" stroke="#f1f1f1" stroke-width="1.3"/></svg>
<svg class="a" style="left:1022px;top:102px" width="12" height="12" viewBox="0 0 12 12"><circle cx="6" cy="6" r="6" fill="#505052"/><path d="M9 6 H3.5 M6 3.2 L3.2 6 L6 8.8" fill="none" stroke="#2d2d30" stroke-width="1.6"/></svg>
<svg class="a" style="left:1044px;top:102px" width="12" height="12" viewBox="0 0 12 12"><circle cx="6" cy="6" r="6" fill="#505052"/><path d="M3 6 H8.5 M6 3.2 L8.8 6 L6 8.8" fill="none" stroke="#2d2d30" stroke-width="1.6"/></svg>
<svg class="a" style="left:1065px;top:100px" width="15" height="15" viewBox="0 0 15 15"><path d="M1 7.5 L7.5 1 L14 7.5 M3 5.5 V14 H12 V5.5" fill="none" stroke="#e0e0e0" stroke-width="1.3"/><rect x="6" y="9.5" width="3" height="4.5" fill="#e0e0e0"/><rect x="11" y="1.5" width="1.5" height="3.5" fill="#e0e0e0"/></svg>
<svg class="a" style="left:1087px;top:100px" width="15" height="16" viewBox="0 0 15 16"><rect x="5.5" y="1.5" width="8.5" height="11.5" fill="#252526" stroke="#d8d8d8" stroke-width="1"/><rect x="5" y="0.5" width="9.5" height="2.5" fill="#d8d8d8"/><g fill="#d8d8d8"><rect x="7" y="4.5" width="1" height="1"/><rect x="9" y="4.5" width="4" height="1"/><rect x="9" y="6.5" width="4" height="1"/><rect x="9" y="8.5" width="4" height="1"/><rect x="9" y="10.5" width="4" height="1"/></g><path d="M0 9 L1.5 8 L4 10 L8 6.5 V15 L4 11.8 L1.5 13.5 L0 12.5 Z" fill="#8a4fd8"/><path d="M1.5 9.8 L3 10.9 L1.5 12 Z M5.5 10.9 L6.5 10 V12 Z" fill="#252526"/></svg>
<div class="a" style="left:1109px;top:99px;width:1px;height:19px;background:#464648;"></div>
<svg class="a" style="left:1119px;top:100px" width="16" height="17" viewBox="0 0 16 17"><path d="M0 1 H5 L3 3.5 V5 H2 V3.5 Z" fill="#e0e0e0"/><circle cx="8.5" cy="10" r="5" fill="none" stroke="#e0e0e0" stroke-width="1.2"/><path d="M8 7 V10.5 H11" fill="none" stroke="#e0e0e0" stroke-width="1.1"/></svg>
<svg class="a" style="left:1139px;top:107px" width="6" height="4" viewBox="0 0 6 4"><path d="M0 0 H6 L3 3.5 Z" fill="#999999"/></svg>
<svg class="a" style="left:1151px;top:100px" width="16" height="15" viewBox="0 0 16 15"><path d="M2 7 C2 3 5 1.5 8 1.5 C10 1.5 12 2.5 13 4" fill="none" stroke="#75beff" stroke-width="2"/><path d="M10.5 4.5 H15 V0 Z" fill="#75beff"/><path d="M14 8 C14 12 11 13.5 8 13.5 C6 13.5 4 12.5 3 11" fill="none" stroke="#75beff" stroke-width="2"/><path d="M5.5 10.5 H1 V15 Z" fill="#75beff"/></svg>
<svg class="a" style="left:1176px;top:101px" width="12" height="12" viewBox="0 0 12 12"><rect x="0.5" y="4.5" width="7" height="7" fill="none" stroke="#e0e0e0"/><path d="M2.5 4.5 V2.5 H9.5 V9.5 H7.5 M4.5 2.5 V0.5 H11.5 V7.5 H9.5" fill="none" stroke="#e0e0e0"/><rect x="2" y="7.5" width="4" height="1" fill="#e0e0e0"/></svg>
<svg class="a" style="left:1195px;top:100px" width="15" height="15" viewBox="0 0 15 15"><path d="M0.5 10 V0.5 H8 M2.5 12 V2.5 H10 M4.5 14.5 V4.5 H11 L14.5 8 V14.5 Z" fill="none" stroke="#e0e0e0" stroke-width="1.1"/><path d="M7 8.5 H11 M7 10.5 H12 M7 12.5 H12" stroke="#e0e0e0" stroke-width="1"/></svg>
<div class="a" style="left:1218px;top:99px;width:1px;height:19px;background:#464648;"></div>
<svg class="a" style="left:1227px;top:102px" width="13" height="10" viewBox="0 0 13 10"><path d="M4.5 0.5 L0.8 5 L4.5 9.5 M8.5 0.5 L12.2 5 L8.5 9.5" fill="none" stroke="#e0e0e0" stroke-width="1.4"/></svg>
<svg class="a" style="left:1247px;top:100px" width="15" height="15" viewBox="0 0 15 15"><path d="M1.5 13.5 L8 7" stroke="#d0d0d0" stroke-width="3" stroke-linecap="round"/><path d="M7 5 C7 2 9.5 0.5 12 1 L9.8 3.5 L11.5 5.2 L14 3 C14.5 6 12.5 8.5 9.5 8 Z" fill="#d0d0d0"/></svg>
<svg class="a" style="left:1270px;top:106px" width="14" height="4" viewBox="0 0 14 4"><rect x="0" y="3" width="14" height="1" fill="#d0d0d0"/><rect x="6" y="0" width="8" height="4" fill="#d0d0d0"/></svg>
<div class="a" style="left:1013px;top:122px;width:334px;height:20px;background:#333337;border-bottom:1px solid #3f3f46"></div>
<div class="a" style="left:1347px;top:122px;width:12px;height:20px;background:#3f3f46;"></div>
<div class="t" style="left:1018px;top:126.84px;font-size:12px;color:#999999;">Search Solution Explorer (Ctrl+ü)</div>
<svg class="a" style="left:1331px;top:126px" width="14" height="13" viewBox="0 0 14 13"><circle cx="9" cy="4.7" r="3.6" fill="none" stroke="#f1f1f1" stroke-width="1.5"/><path d="M6.5 7.2 L1.5 12" stroke="#f1f1f1" stroke-width="2.2" stroke-linecap="round"/></svg>
<svg class="a" style="left:1349px;top:130px" width="6" height="4" viewBox="0 0 6 4"><path d="M0 0 H6 L3 3.5 Z" fill="#f1f1f1"/></svg>
<div class="a" style="left:1013px;top:145px;width:329px;height:288px;background:#252526;"></div>
<div class="a" style="left:1342px;top:145px;width:17px;height:288px;background:#3e3e42;"></div>
<svg class="a" style="left:1346px;top:151px" width="9" height="5" viewBox="0 0 9 5"><path d="M0 5 L4.5 0 L9 5 Z" fill="#999999"/></svg>
<div class="a" style="left:1346px;top:162px;width:9px;height:10px;background:#686868;"></div>
<svg class="a" style="left:1346px;top:421px" width="9" height="5" viewBox="0 0 9 5"><path d="M0 0 L4.5 5 L9 0 Z" fill="#999999"/></svg>
<div class="a" style="left:1013px;top:163px;width:329px;height:18px;background:#3f3f46;"></div>
<svg class="a" style="left:1028px;top:148px" width="15" height="15" viewBox="0 0 15 15"><path d="M0.5 7 V0.5 H14 V11.5 H9" fill="none" stroke="#d8d8d8" stroke-width="1"/><rect x="0" y="0" width="14.5" height="3" fill="#d8d8d8"/><path d="M0 7.5 L2.5 9.5 L0 11.5 Z M1.5 9.5 L7 5.5 V14 Z" fill="#8a4fd8"/><path d="M0 7 L2.5 9 V10 L0 12 Z" fill="#8a4fd8"/></svg>
<div class="t" style="left:1048px;top:148.84px;font-size:12px;">Solution 'GPTP' (1 of 1 project)</div>
<svg class="a" style="left:1024px;top:169px" width="7" height="7" viewBox="0 0 7 7"><path d="M6.5 0.5 V6.5 H0.5 Z" fill="#e8e8e8"/></svg>
<svg class="a" style="left:1046px;top:167px" width="14" height="12" viewBox="0 0 14 12"><rect x="0.5" y="0.5" width="13" height="11" fill="#333337" stroke="#c586c0" stroke-width="1"/><g fill="#e0e0e0"><rect x="2" y="3" width="6" height="2"/><rect x="4" y="1" width="2" height="6"/><rect x="6" y="7" width="6" height="2"/><rect x="8" y="5" width="2" height="6"/></g></svg>
<div class="t" style="left:1066px;top:166.84px;font-size:12px;font-weight:bold;">GPTP</div>
<svg class="a" style="left:1042px;top:185px" width="6" height="11" viewBox="0 0 6 11"><path d="M0.6 0.8 L5.2 5.5 L0.6 10.2 Z" fill="none" stroke="#e0e0e0" stroke-width="1.1"/></svg>
<svg class="a" style="left:1064px;top:186px" width="14" height="9" viewBox="0 0 14 9"><rect x="0" y="1.5" width="4" height="5" fill="#c8c8c8"/><rect x="5" y="3.5" width="2" height="1" fill="#c8c8c8"/><rect x="8" y="0" width="6" height="8" fill="#c8c8c8"/></svg>
<div class="t" style="left:1084px;top:184.84px;font-size:12px;">References</div>
<svg class="a" style="left:1042px;top:203px" width="6" height="11" viewBox="0 0 6 11"><path d="M0.6 0.8 L5.2 5.5 L0.6 10.2 Z" fill="none" stroke="#e0e0e0" stroke-width="1.1"/></svg>
<svg class="a" style="left:1064px;top:202px" width="14" height="14" viewBox="0 0 14 14"><path d="M0 0.5 H5.5 L6.5 2 H13 V11 H0 Z" fill="#dcb67a"/><rect x="0" y="3" width="13" height="1" fill="#252526" opacity="0.35"/><rect x="0.5" y="6.5" width="7" height="7" fill="#252526" stroke="#1ba1e2" stroke-width="1"/><path d="M2.5 11.5 L5.5 8.5 M3.5 8.5 H5.5 V10.5" fill="none" stroke="#1ba1e2" stroke-width="1"/></svg>
<div class="t" style="left:1084px;top:202.84px;font-size:12px;">External Dependencies</div>
<svg class="a" style="left:1042px;top:221px" width="6" height="11" viewBox="0 0 6 11"><path d="M0.6 0.8 L5.2 5.5 L0.6 10.2 Z" fill="none" stroke="#e0e0e0" stroke-width="1.1"/></svg>
<svg class="a" style="left:1065px;top:223px" width="13" height="9" viewBox="0 0 13 9"><g fill="#c586c0"><rect x="0" y="2" width="6" height="2"/><rect x="2" y="0" width="2" height="6"/><rect x="6" y="5" width="6" height="2"/><rect x="8" y="3" width="2" height="6"/></g></svg>
<div class="t" style="left:1084px;top:220.84px;font-size:12px;">api.cpp</div>
<svg class="a" style="left:1042px;top:239px" width="6" height="11" viewBox="0 0 6 11"><path d="M0.6 0.8 L5.2 5.5 L0.6 10.2 Z" fill="none" stroke="#e0e0e0" stroke-width="1.1"/></svg>
<svg class="a" style="left:1066px;top:239px" width="11" height="13" viewBox="0 0 11 13"><path d="M0.5 0.5 H7 L10.5 4 V12.5 H0.5 Z" fill="none" stroke="#d0d0d0" stroke-width="1"/><path d="M7 0.5 L10.5 4 H7 Z" fill="#d0d0d0"/><path d="M3.5 4 V10 M3.5 7 H6.5 V10" fill="none" stroke="#c586c0" stroke-width="1.2"/></svg>
<div class="t" style="left:1084px;top:238.84px;font-size:12px;">api.h</div>
<svg class="a" style="left:1042px;top:257px" width="6" height="11" viewBox="0 0 6 11"><path d="M0.6 0.8 L5.2 5.5 L0.6 10.2 Z" fill="none" stroke="#e0e0e0" stroke-width="1.1"/></svg>
<svg class="a" style="left:1065px;top:259px" width="13" height="9" viewBox="0 0 13 9"><g fill="#c586c0"><rect x="0" y="2" width="6" height="2"/><rect x="2" y="0" width="2" height="6"/><rect x="6" y="5" width="6" height="2"/><rect x="8" y="3" width="2" height="6"/></g></svg>
<div class="t" style="left:1084px;top:256.84px;font-size:12px;">apply_upgrade_flags.cpp</div>
<svg class="a" style="left:1042px;top:275px" width="6" height="11" viewBox="0 0 6 11"><path d="M0.6 0.8 L5.2 5.5 L0.6 10.2 Z" fill="none" stroke="#e0e0e0" stroke-width="1.1"/></svg>
<svg class="a" style="left:1066px;top:275px" width="11" height="13" viewBox="0 0 11 13"><path d="M0.5 0.5 H7 L10.5 4 V12.5 H0.5 Z" fill="none" stroke="#d0d0d0" stroke-width="1"/><path d="M7 0.5 L10.5 4 H7 Z" fill="#d0d0d0"/><path d="M3.5 4 V10 M3.5 7 H6.5 V10" fill="none" stroke="#c586c0" stroke-width="1.2"/></svg>
<div class="t" style="left:1084px;top:274.84px;font-size:12px;">apply_upgrade_flags.h</div>
<svg class="a" style="left:1042px;top:293px" width="6" height="11" viewBox="0 0 6 11"><path d="M0.6 0.8 L5.2 5.5 L0.6 10.2 Z" fill="none" stroke="#e0e0e0" stroke-width="1.1"/></svg>
<svg class="a" style="left:1065px;top:295px" width="13" height="9" viewBox="0 0 13 9"><g fill="#c586c0"><rect x="0" y="2" width="6" height="2"/><rect x="2" y="0" width="2" height="6"/><rect x="6" y="5" width="6" height="2"/><rect x="8" y="3" width="2" height="6"/></g></svg>
<div class="t" style="left:1084px;top:292.84px;font-size:12px;">apply_upgrade_flags_inject.cpp</div>
<svg class="a" style="left:1042px;top:311px" width="6" height="11" viewBox="0 0 6 11"><path d="M0.6 0.8 L5.2 5.5 L0.6 10.2 Z" fill="none" stroke="#e0e0e0" stroke-width="1.1"/></svg>
<svg class="a" style="left:1065px;top:313px" width="13" height="9" viewBox="0 0 13 9"><g fill="#c586c0"><rect x="0" y="2" width="6" height="2"/><rect x="2" y="0" width="2" height="6"/><rect x="6" y="5" width="6" height="2"/><rect x="8" y="3" width="2" height="6"/></g></svg>
<div class="t" style="left:1084px;top:310.84px;font-size:12px;">armor_bonus.cpp</div>
<svg class="a" style="left:1042px;top:329px" width="6" height="11" viewBox="0 0 6 11"><path d="M0.6 0.8 L5.2 5.5 L0.6 10.2 Z" fill="none" stroke="#e0e0e0" stroke-width="1.1"/></svg>
<svg class="a" style="left:1066px;top:329px" width="11" height="13" viewBox="0 0 11 13"><path d="M0.5 0.5 H7 L10.5 4 V12.5 H0.5 Z" fill="none" stroke="#d0d0d0" stroke-width="1"/><path d="M7 0.5 L10.5 4 H7 Z" fill="#d0d0d0"/><path d="M3.5 4 V10 M3.5 7 H6.5 V10" fill="none" stroke="#c586c0" stroke-width="1.2"/></svg>
<div class="t" style="left:1084px;top:328.84px;font-size:12px;">armor_bonus.h</div>
<svg class="a" style="left:1042px;top:347px" width="6" height="11" viewBox="0 0 6 11"><path d="M0.6 0.8 L5.2 5.5 L0.6 10.2 Z" fill="none" stroke="#e0e0e0" stroke-width="1.1"/></svg>
<svg class="a" style="left:1065px;top:349px" width="13" height="9" viewBox="0 0 13 9"><g fill="#c586c0"><rect x="0" y="2" width="6" height="2"/><rect x="2" y="0" width="2" height="6"/><rect x="6" y="5" width="6" height="2"/><rect x="8" y="3" width="2" height="6"/></g></svg>
<div class="t" style="left:1084px;top:346.84px;font-size:12px;">armor_bonus_inject.cpp</div>
<svg class="a" style="left:1042px;top:365px" width="6" height="11" viewBox="0 0 6 11"><path d="M0.6 0.8 L5.2 5.5 L0.6 10.2 Z" fill="none" stroke="#e0e0e0" stroke-width="1.1"/></svg>
<svg class="a" style="left:1065px;top:367px" width="13" height="9" viewBox="0 0 13 9"><g fill="#c586c0"><rect x="0" y="2" width="6" height="2"/><rect x="2" y="0" width="2" height="6"/><rect x="6" y="5" width="6" height="2"/><rect x="8" y="3" width="2" height="6"/></g></svg>
<div class="t" style="left:1084px;top:364.84px;font-size:12px;">attack_orders.cpp</div>
<svg class="a" style="left:1042px;top:383px" width="6" height="11" viewBox="0 0 6 11"><path d="M0.6 0.8 L5.2 5.5 L0.6 10.2 Z" fill="none" stroke="#e0e0e0" stroke-width="1.1"/></svg>
<svg class="a" style="left:1066px;top:383px" width="11" height="13" viewBox="0 0 11 13"><path d="M0.5 0.5 H7 L10.5 4 V12.5 H0.5 Z" fill="none" stroke="#d0d0d0" stroke-width="1"/><path d="M7 0.5 L10.5 4 H7 Z" fill="#d0d0d0"/><path d="M3.5 4 V10 M3.5 7 H6.5 V10" fill="none" stroke="#c586c0" stroke-width="1.2"/></svg>
<div class="t" style="left:1084px;top:382.84px;font-size:12px;">attack_orders.h</div>
<svg class="a" style="left:1042px;top:401px" width="6" height="11" viewBox="0 0 6 11"><path d="M0.6 0.8 L5.2 5.5 L0.6 10.2 Z" fill="none" stroke="#e0e0e0" stroke-width="1.1"/></svg>
<svg class="a" style="left:1065px;top:403px" width="13" height="9" viewBox="0 0 13 9"><g fill="#c586c0"><rect x="0" y="2" width="6" height="2"/><rect x="2" y="0" width="2" height="6"/><rect x="6" y="5" width="6" height="2"/><rect x="8" y="3" width="2" height="6"/></g></svg>
<div class="t" style="left:1084px;top:400.84px;font-size:12px;">attack_orders_inject.cpp</div>
<svg class="a" style="left:1042px;top:419px" width="6" height="11" viewBox="0 0 6 11"><path d="M0.6 0.8 L5.2 5.5 L0.6 10.2 Z" fill="none" stroke="#e0e0e0" stroke-width="1.1"/></svg>
<svg class="a" style="left:1065px;top:421px" width="13" height="9" viewBox="0 0 13 9"><g fill="#c586c0"><rect x="0" y="2" width="6" height="2"/><rect x="2" y="0" width="2" height="6"/><rect x="6" y="5" width="6" height="2"/><rect x="8" y="3" width="2" height="6"/></g></svg>
<div class="t" style="left:1084px;top:418.84px;font-size:12px;">attack_priority.cpp</div>
<div class="a" style="left:1012px;top:433px;width:101px;height:21px;background:#252526;border-left:1px solid #3f3f46;border-right:1px solid #3f3f46;border-bottom:1px solid #3f3f46"></div>
<div class="t" style="left:1018px;top:436.84px;font-size:12px;color:#0b97f7;">Solution Explorer</div>
<div class="a" style="left:1113px;top:433px;width:247px;height:21px;background:#2d2d30;border-top:1px solid #3f3f46;border-right:1px solid #3f3f46"></div>
<div class="t" style="left:1120px;top:436.84px;font-size:12px;">Git Changes</div>
<div class="a" style="left:1012px;top:460px;width:348px;height:278px;background:#2d2d30;border:1px solid #3f3f46"></div>
<div class="t" style="left:1017px;top:465.84px;font-size:12px;">Properties</div>
<div class="a" style="left:1080px;top:468px;width:223px;height:6px;background-image:radial-gradient(#424246 0.8px, transparent 0.9px);background-size:4px 4px"></div>
<svg class="a" style="left:1311px;top:469px" width="8" height="5" viewBox="0 0 8 5"><path d="M0 0 H8 L4 4.5 Z" fill="#f1f1f1"/></svg>
<svg class="a" style="left:1327px;top:466px" width="9" height="12" viewBox="0 0 9 12"><path d="M2 0.5 H7 M2.5 0.5 V6.5 M6.5 0.5 V6.5 M0.5 6.5 H8.5 M4.5 6.5 V11.5" fill="none" stroke="#f1f1f1" stroke-width="1.2"/><rect x="4" y="1" width="2" height="5" fill="#f1f1f1"/></svg>
<svg class="a" style="left:1343px;top:466px" width="10" height="10" viewBox="0 0 10 10"><path d="M0.5 0.5 L9.5 9.5 M9.5 0.5 L0.5 9.5" stroke="#f1f1f1" stroke-width="1.3"/></svg>
<div class="a" style="left:1013px;top:482px;width:345px;height:24px;background:#333337;"></div>
<svg class="a" style="left:1350px;top:493px" width="6" height="4" viewBox="0 0 6 4"><path d="M0 0 H6 L3 3.5 Z" fill="#f1f1f1"/></svg>
<div class="a" style="left:1016px;top:508px;width:23px;height:22px;background:#2d2d30;border:1px solid #3399ff"></div>
<svg class="a" style="left:1012px;top:504px" width="80" height="30" viewBox="0 0 80 30"><g fill="#d4d4d4"><rect x="8" y="8" width="5" height="5"/><rect x="8" y="17" width="5" height="5"/><rect x="14" y="8" width="5" height="1"/><rect x="14" y="10" width="5" height="1"/><rect x="14" y="12" width="5" height="1"/><rect x="14" y="14" width="5" height="1"/><rect x="14" y="16" width="5" height="1"/><rect x="14" y="19" width="5" height="1"/><rect x="14" y="21" width="5" height="1"/><rect x="20" y="10" width="2" height="1"/><rect x="20" y="12" width="2" height="1"/><rect x="20" y="14" width="2" height="1"/><rect x="20" y="16" width="2" height="1"/><rect x="20" y="21" width="2" height="1"/><rect x="31" y="8" width="7" height="7"/><path d="M32 17 H37 V18.3 L33.8 20.8 H37 V22 H32 V20.7 L35.2 18.2 H32 Z"/></g><g fill="#2d2d30"><rect x="10" y="9" width="1" height="3"/><rect x="9" y="10" width="3" height="1"/><rect x="10" y="18" width="1" height="3"/><rect x="9" y="19" width="3" height="1"/></g><path d="M32.5 14 L34.5 9 L36.5 14 M33.3 12.2 H35.7" fill="none" stroke="#2d2d30" stroke-width="1"/><path d="M42 11 V20 M39.5 17.5 L42 20.5 L44.5 17.5" fill="none" stroke="#75beff" stroke-width="2"/><rect x="53" y="6" width="1" height="20" fill="#464648"/><path d="M60 21 L66 15 M62 23 L68 17" stroke="#8c8c8c" stroke-width="0"/><path d="M59 21.5 L65.5 15 L68.5 18 L62 24.5 Z" fill="#9a9a9a"/><path d="M64 11 L68 7 H72 L75 10 V14 L71 18 H67 L64 15 Z" fill="#9a9a9a"/><rect x="70" y="9" width="2" height="3.5" fill="#6e6e6e" transform="rotate(45 71 10.5)"/></svg>
<div class="a" style="left:1013px;top:533px;width:346px;height:204px;background:#252526;"></div>
<div class="a" style="left:1013px;top:674px;width:346px;height:1px;background:#333337;"></div>
<div class="a" style="left:366px;top:516px;width:494px;height:106px;background:#424245;border:1px solid #4d4d50;border-radius:2px"></div>
<svg class="a" style="left:379px;top:525px" width="12" height="11" viewBox="0 0 12 11"><path d="M1 3.5 L6 1 L11 3.5 V7.5 L6 10 L1 7.5 Z" fill="#a8d6ff"/><path d="M1 3.5 L6 6 L11 3.5 M6 6 V10" fill="none" stroke="#75beff" stroke-width="1"/></svg>
<div class="t" style="left:399px;top:525.24px;font-size:12px;"><span style="color:#c8c8c8">std::</span><span style="color:#4ec9b0">array</span><span style="color:#b4b4b4">&lt;</span><span style="color:#4ec9b0">swishTimer</span><span style="color:#b4b4b4">, </span><span style="color:#b5cea8">5U</span><span style="color:#b4b4b4">&gt;</span><span style="color:#dadada;margin-left:6px">&amp;gluChatSwishController</span></div>
<div class="t" style="left:379px;top:545.84px;font-size:12px;color:#0b97f7;">Search Online</div>
<div class="t" style="left:379px;top:572.84px;font-size:12px;color:#f1f1f1;">this range-based 'for' statement requires a suitable "begin" function and none was found</div>
<div class="t" style="left:379px;top:599.84px;font-size:12px;color:#0b97f7;">Search Online</div>
</body></html>
